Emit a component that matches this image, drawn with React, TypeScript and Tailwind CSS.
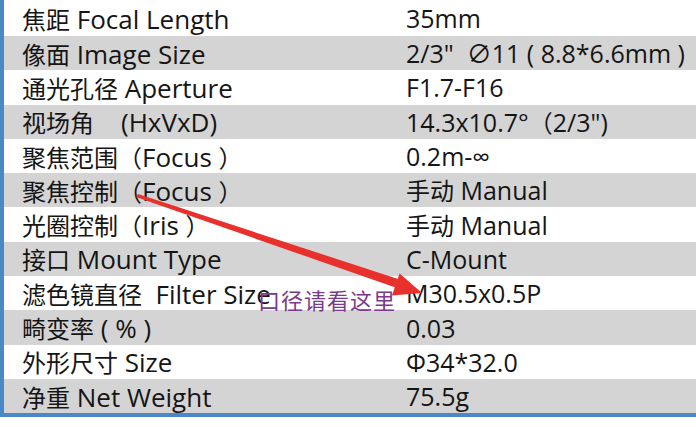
import React from 'react';

const specs: [string, string][] = [
  ['焦距 Focal Length', '35mm'],
  ['像面 Image Size', '2/3"  ∅11 ( 8.8*6.6mm )'],
  ['通光孔径 Aperture', 'F1.7-F16'],
  ['视场角    (HxVxD)', '14.3x10.7°（2/3")'],
  ['聚焦范围（Focus ）', '0.2m-∞'],
  ['聚焦控制（Focus ）', '手动 Manual'],
  ['光圈控制（Iris ）', '手动 Manual'],
  ['接口 Mount Type', 'C-Mount'],
  ['滤色镜直径  Filter Size', 'M30.5x0.5P'],
  ['畸变率 ( % )', '0.03'],
  ['外形尺寸 Size', 'Φ34*32.0'],
  ['净重 Net Weight', '75.5g'],
];

// split text into CJK / latin runs so latin can be set a bit larger
const Mixed: React.FC<{ text: string; latin: string }> = ({ text, latin }) => {
  const parts = text.match(/[\u3000-\u9fff\uff00-\uffef]+|[^\u3000-\u9fff\uff00-\uffef]+/g) || [];
  return (
    <>
      {parts.map((p, i) =>
        /[\u3000-\u9fff\uff00-\uffef]/.test(p) ? (
          <span key={i} className="text-[24px]">{p}</span>
        ) : (
          <span key={i} className={latin}>{p}</span>
        )
      )}
    </>
  );
};

const App: React.FC = () => {
  return (
    <div className="relative w-[696px] h-[427px] bg-white overflow-hidden font-['Open_Sans','Noto_Sans_CJK_SC',sans-serif] text-[#151515]">
      {/* Spec table */}
      <div className="border-l-4 border-b-4 border-[#4a88c8] w-[696px]">
        {specs.map(([label, value], i) => (
          <div
            key={i}
            className={`flex items-center leading-none whitespace-pre ${i === 0 ? 'h-[36px]' : 'h-[34.3px]'} ${i % 2 === 1 ? 'bg-[#d4d4d4]' : 'bg-white'}`}
          >
            <div className="w-[402px] pl-[18px] pt-[1px]">
              <Mixed text={label} latin="text-[26px]" />
            </div>
            <div className="pt-[1px]">
              <Mixed text={value} latin="text-[25px]" />
            </div>
          </div>
        ))}
      </div>

      {/* Annotation arrow */}
      <svg className="absolute left-0 top-0" width="696" height="427">
        <polygon points="138,194 398,279 395.5,287.5 136,197" fill="#e8302c" />
        <polygon points="422,293 392,295.5 399.6,273.5" fill="#e8302c" />
      </svg>

      {/* Annotation note */}
      <div className="absolute left-[258px] top-[283px] text-[22px] leading-normal text-[#7b3a8c] font-['Noto_Sans_CJK_SC',serif] tracking-[1px]">
        口径请看这里
      </div>
    </div>
  );
};

export default App;
